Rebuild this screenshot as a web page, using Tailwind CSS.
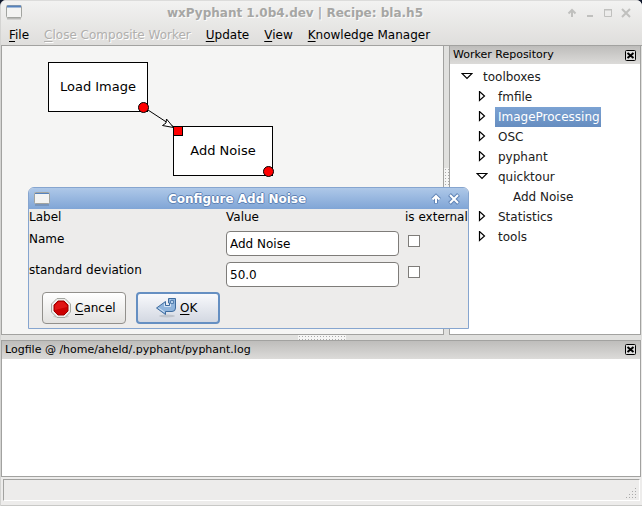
<!DOCTYPE html>
<html lang="en">
<head>
<meta charset="utf-8">
<title>wxPyphant 1.0b4.dev | Recipe: bla.h5</title>
<script src="https://cdn.jsdelivr.net/npm/@tailwindcss/browser@4"></script>
</head>
<body class="h-screen bg-[#10182c] font-['DejaVu_Sans',sans-serif] text-[12px] leading-[20px] text-black">
<div class="relative flex h-full flex-col overflow-hidden rounded-t-md border-l border-[#d4d4d2] bg-[#edeceb]">

  <header class="h-[46px] shrink-0 border-t border-[#dcdcdb] border-b border-b-[#a2a2a0] bg-linear-to-b from-[#f2f2f1] to-[#dfdedc]">
    <div class="flex h-6 items-center pr-2 pl-[5px]">
      <svg class="h-4 w-4 shrink-0" viewBox="0 0 16 16" aria-hidden="true"><path d="M1 13.500h14" stroke="#b9b9b7" stroke-width="2"/><rect x=".5" y=".5" width="15" height="12" rx="1" fill="#f3f3f2" stroke="#a2a4a0"/><path d="M1 1.500h14" stroke="#5582bd" stroke-width="2"/></svg>
      <h1 class="flex-1 pl-1 text-center font-bold text-[#a6a6a4] [text-shadow:1px_1px_0_#fafafa]">wxPyphant 1.0b4.dev | Recipe: bla.h5</h1>
      <div class="flex gap-[2px] text-[#c0c0be]">
        <button aria-label="Shade" class="h-4 w-4"><svg viewBox="0 0 16 16" fill="none" stroke="currentColor" stroke-width="2"><path d="M8 12V5M4.500 8.500 8 5l3.500 3.500"/></svg></button>
        <button aria-label="Minimize" class="h-4 w-4"><svg viewBox="0 0 16 16" fill="none" stroke="currentColor" stroke-width="2"><path d="M5 11h6"/></svg></button>
        <button aria-label="Maximize" class="h-4 w-4"><svg viewBox="0 0 16 16" fill="none" stroke="currentColor"><path d="M4.500 5v6.500h7V5M4 5h8" /><path d="M4 4.500h8"/></svg></button>
        <button aria-label="Close" class="h-4 w-4"><svg viewBox="0 0 16 16" fill="none" stroke="currentColor" stroke-width="2"><path d="m4 4 8 8M12 4l-8 8"/></svg></button>
      </div>
    </div>
    <nav class="flex gap-[15px] pl-2" aria-label="Menu">
      <button><u class="underline-offset-2">F</u>ile</button>
      <button disabled class="text-[#b0afad] [text-shadow:1px_1px_0_#fff]"><u class="underline-offset-2">C</u>lose Composite Worker</button>
      <button><u class="underline-offset-2">U</u>pdate</button>
      <button><u class="underline-offset-2">V</u>iew</button>
      <button><u class="underline-offset-2">K</u>nowledge Manager</button>
    </nav>
  </header>

  <main class="flex min-h-0 flex-[290] bg-[#e0e0de]">
    <section class="relative flex-1 overflow-hidden border border-t-0 border-[#a2a2a0] bg-[#f5f5f4] text-[13px]" aria-label="Recipe">
      <div class="absolute top-4 left-[46px] flex h-[50px] w-[100px] items-center justify-center border border-black bg-white">Load Image</div>
      <div class="absolute top-20 left-[171px] flex h-[50px] w-[100px] items-center justify-center border border-black bg-white">Add Noise</div>
      <svg class="absolute top-0 left-0 h-[140px] w-[300px]" viewBox="2 46 300 140" stroke="#000" aria-hidden="true">
        <path d="m148 110 26 17" fill="none"/>
        <path d="m173.500 127.500-11-2 3.500-2.500.5-4z" fill="#fff"/>
        <circle cx="143.500" cy="107.500" r="5" fill="red"/>
        <circle cx="268.500" cy="171.500" r="5" fill="red"/>
        <rect x="173.500" y="126.500" width="9" height="9" fill="red"/>
      </svg>
    </section>
    <div class="flex w-[5px] items-center justify-center"><div class="h-11 w-[5px] bg-[radial-gradient(#aaa_0.8px,#f5f5f4_1px)] bg-size-[3px_3px]"></div></div>
    <aside class="mr-px w-[192px] shrink-0 border border-t-0 border-[#a2a2a0] bg-white">
      <div class="flex h-[18px] items-center justify-between bg-linear-to-b from-[#bebdbb] to-[#dcdbd9] pr-1 pl-[3px]">
        <h2 class="text-[11px]">Worker Repository</h2>
        <button aria-label="Close repository" class="h-[11px] w-[11px]"><svg viewBox="0 0 11 11" class="h-[11px] w-[11px]"><rect x=".5" y=".5" width="10" height="10" rx="1" fill="#ddd" stroke="#000"/><path d="m2.500 3 6 5M8.500 3l-6 5" stroke="#000" stroke-width="2"/></svg></button>
      </div>
      <ul class="pt-[3px] text-[#202020]">
        <li>
          <button class="flex items-center pl-[11px]"><svg class="mr-[7px] h-3 w-3" viewBox="0 0 12 12" fill="#fff" stroke="#000" stroke-width="1.200"><path d="M1 2.500h10L6 7.500z"/></svg><span class="px-[3px]">toolboxes</span></button>
          <ul class="pl-[26px]">
            <li><button class="flex items-center"><svg class="mr-[7px] h-3 w-3" viewBox="0 0 12 12" fill="#fff" stroke="#000" stroke-width="1.200"><path d="M3.500.5v9l5-4.500z"/></svg><span class="px-[3px]">fmfile</span></button></li>
            <li><button class="flex items-center"><svg class="mr-[7px] h-3 w-3" viewBox="0 0 12 12" fill="#fff" stroke="#000" stroke-width="1.200"><path d="M3.500.5v9l5-4.500z"/></svg><span class="bg-linear-to-b from-[#7ba2d3] to-[#668dc0] pr-px pl-[3px] text-white">ImageProcessing</span></button></li>
            <li><button class="flex items-center"><svg class="mr-[7px] h-3 w-3" viewBox="0 0 12 12" fill="#fff" stroke="#000" stroke-width="1.200"><path d="M3.500.5v9l5-4.500z"/></svg><span class="px-[3px]">OSC</span></button></li>
            <li><button class="flex items-center"><svg class="mr-[7px] h-3 w-3" viewBox="0 0 12 12" fill="#fff" stroke="#000" stroke-width="1.200"><path d="M3.500.5v9l5-4.500z"/></svg><span class="px-[3px]">pyphant</span></button></li>
            <li><button class="flex items-center"><svg class="mr-[7px] h-3 w-3" viewBox="0 0 12 12" fill="#fff" stroke="#000" stroke-width="1.200"><path d="M1 2.500h10L6 7.500z"/></svg><span class="px-[3px]">quicktour</span></button>
              <ul class="pl-[34px]"><li><button class="px-[3px]">Add Noise</button></li></ul></li>
            <li><button class="flex items-center"><svg class="mr-[7px] h-3 w-3" viewBox="0 0 12 12" fill="#fff" stroke="#000" stroke-width="1.200"><path d="M3.500.5v9l5-4.500z"/></svg><span class="px-[3px]">Statistics</span></button></li>
            <li><button class="flex items-center"><svg class="mr-[7px] h-3 w-3" viewBox="0 0 12 12" fill="#fff" stroke="#000" stroke-width="1.200"><path d="M3.500.5v9l5-4.500z"/></svg><span class="px-[3px]">tools</span></button></li>
          </ul>
        </li>
      </ul>
    </aside>
  </main>

  <div class="flex h-[5px] shrink-0 justify-center bg-[#e0e0de]"><div class="h-[5px] w-12 bg-[radial-gradient(#aaa_0.8px,#f5f5f4_1px)] bg-size-[3px_3px]"></div></div>

  <section class="mr-px min-h-0 flex-[136] border border-[#a2a2a0] bg-white" aria-label="Log">
    <div class="flex h-[18px] items-center justify-between bg-linear-to-b from-[#bebdbb] to-[#dcdbd9] pr-1 pl-[3px]">
      <h2 class="text-[11px]">Logfile @ /home/aheld/.pyphant/pyphant.log</h2>
      <button aria-label="Close log" class="h-[11px] w-[11px]"><svg viewBox="0 0 11 11" class="h-[11px] w-[11px]"><rect x=".5" y=".5" width="10" height="10" rx="1" fill="#ddd" stroke="#000"/><path d="m2.500 3 6 5M8.500 3l-6 5" stroke="#000" stroke-width="2"/></svg></button>
    </div>
  </section>

  <footer class="shrink-0 border-b border-[#c8c8c6] px-[2px] pt-[2px] pb-1">
    <div class="flex h-[22px] items-end justify-end border border-[#a2a2a0] border-r-white border-b-white pr-[2px]">
      <svg class="h-3 w-3" viewBox="0 0 12 12" fill="#aaa" aria-hidden="true"><path d="M10 0h1v1h-1zM10 3h1v1h-1zM10 6h1v1h-1zM10 9h1v1h-1zM7 3h1v1H7zM7 6h1v1H7zM7 9h1v1H7zM4 6h1v1H4zM4 9h1v1H4zM1 9h1v1H1z"/></svg>
    </div>
  </footer>

  <form role="dialog" aria-label="Configure Add Noise" class="absolute top-[187px] left-[27px] w-[441px] overflow-hidden rounded-t-md border border-[#86a5cf] bg-[#edeceb] pb-1">
    <div class="flex h-[21px] items-center bg-linear-to-b from-[#aec8e8] to-[#80a5d6] pr-[6px] pl-[5px]">
      <svg class="h-4 w-4 shrink-0" viewBox="0 0 16 16" aria-hidden="true"><path d="M1 14h14" stroke="#7895bc" stroke-width="2"/><rect x=".5" y="1.500" width="15" height="11" rx="1" fill="#f3f3f2" stroke="#a2a4a0"/><path d="M1 2.500h14" stroke="#5582bd"/></svg>
      <h2 class="flex-1 pr-1 text-center font-bold text-white [text-shadow:1px_0_0_#5f83b5,-1px_0_0_#5f83b5,0_1px_0_#5f83b5,0_-1px_0_#5f83b5]">Configure Add Noise</h2>
      <div class="flex gap-[2px] text-white">
        <button type="button" aria-label="Shade dialog" class="h-4 w-4"><svg viewBox="0 0 16 16" fill="none"><path d="M8 12.500V5M4.500 8.500 8 5l3.500 3.500" stroke="#5f83b5" stroke-width="4"/><path d="M8 12V5M4.500 8.500 8 5l3.500 3.500" stroke="#fff" stroke-width="2"/></svg></button>
        <button type="button" aria-label="Close dialog" class="h-4 w-4"><svg viewBox="0 0 16 16" fill="none"><path d="m3.500 3.500 9 9M12.500 3.500l-9 9" stroke="#5f83b5" stroke-width="4"/><path d="m4 4 8 8M12 4l-8 8" stroke="#fff" stroke-width="2"/></svg></button>
      </div>
    </div>
    <div class="grid grid-cols-[197px_1fr_63px] gap-y-[5px]">
      <span class="h-[17px] leading-[17px]">Label</span><span class="h-[17px] leading-[17px]">Value</span><span class="h-[17px] leading-[17px] whitespace-nowrap">is external</span>
      <label for="name" class="leading-4">Name</label>
      <input id="name" value="Add Noise" class="mr-[6px] h-[25px] min-w-0 rounded border border-[#7e7c79] bg-white px-[3px]">
      <input type="checkbox" aria-label="Name is external" class="mt-[4px] ml-[3px] h-3 w-3 appearance-none border border-[#7e7c79] bg-white checked:bg-[#668dc0]">
      <label for="sd" class="mt-px leading-4">standard deviation</label>
      <input id="sd" value="50.0" class="mt-px mr-[6px] h-[25px] min-w-0 rounded border border-[#7e7c79] bg-white px-[3px]">
      <input type="checkbox" aria-label="Standard deviation is external" class="mt-[5px] ml-[3px] h-3 w-3 appearance-none border border-[#7e7c79] bg-white checked:bg-[#668dc0]">
    </div>
    <div class="flex gap-[10px] pt-[5px] pl-[13px]">
      <button type="button" class="flex h-8 w-[84px] items-center gap-1 rounded border border-[#92908c] bg-linear-to-b from-white to-[#e3e2e0] pl-2">
        <svg class="h-5 w-5" viewBox="0 0 20 20"><ellipse cx="10" cy="18.500" rx="8" ry="1.500" fill="#cfcecb"/><path d="M6 .5h8L19.500 6v8L14 19.500H6L.5 14V6z" fill="#eeeeec" stroke="#a5a7a1"/><path d="M7 3h6l4 4v6l-4 4H7l-4-4V7z" fill="#c00"  stroke="#a00000"/><path d="M7.500 4h5L16 7.500V9L4 12V7.500z" fill="#e01515"/></svg>
        <span><u class="underline-offset-2">C</u>ancel</span>
      </button>
      <button type="submit" class="flex h-8 w-[84px] items-center gap-1 rounded border-2 border-[#658fc2] bg-linear-to-b from-[#f8f9fc] to-[#d3d8e2] pl-[18px]">
        <svg class="h-5 w-5" viewBox="0 0 20 20"><ellipse cx="11" cy="18" rx="8" ry="1.500" fill="#bfc4cc"/><path d="M12.500 .5h7V10q0 3.500-3.500 3.500H9.500v3L.5 10l9-6.500V7.500h4V5h-1z" fill="#8fb4dc" stroke="#3d6b9e"/><path d="M8.500 5.500v3h6V1.500M2.500 10l6 4" fill="none" stroke="#d3e3f5"/><path d="M14.500 2.500h3v3h-3z" fill="#b7d0ea" stroke="#5580b0"/></svg>
        <span><u class="underline-offset-2">O</u>K</span>
      </button>
    </div>
  </form>
</div>
</body>
</html>
